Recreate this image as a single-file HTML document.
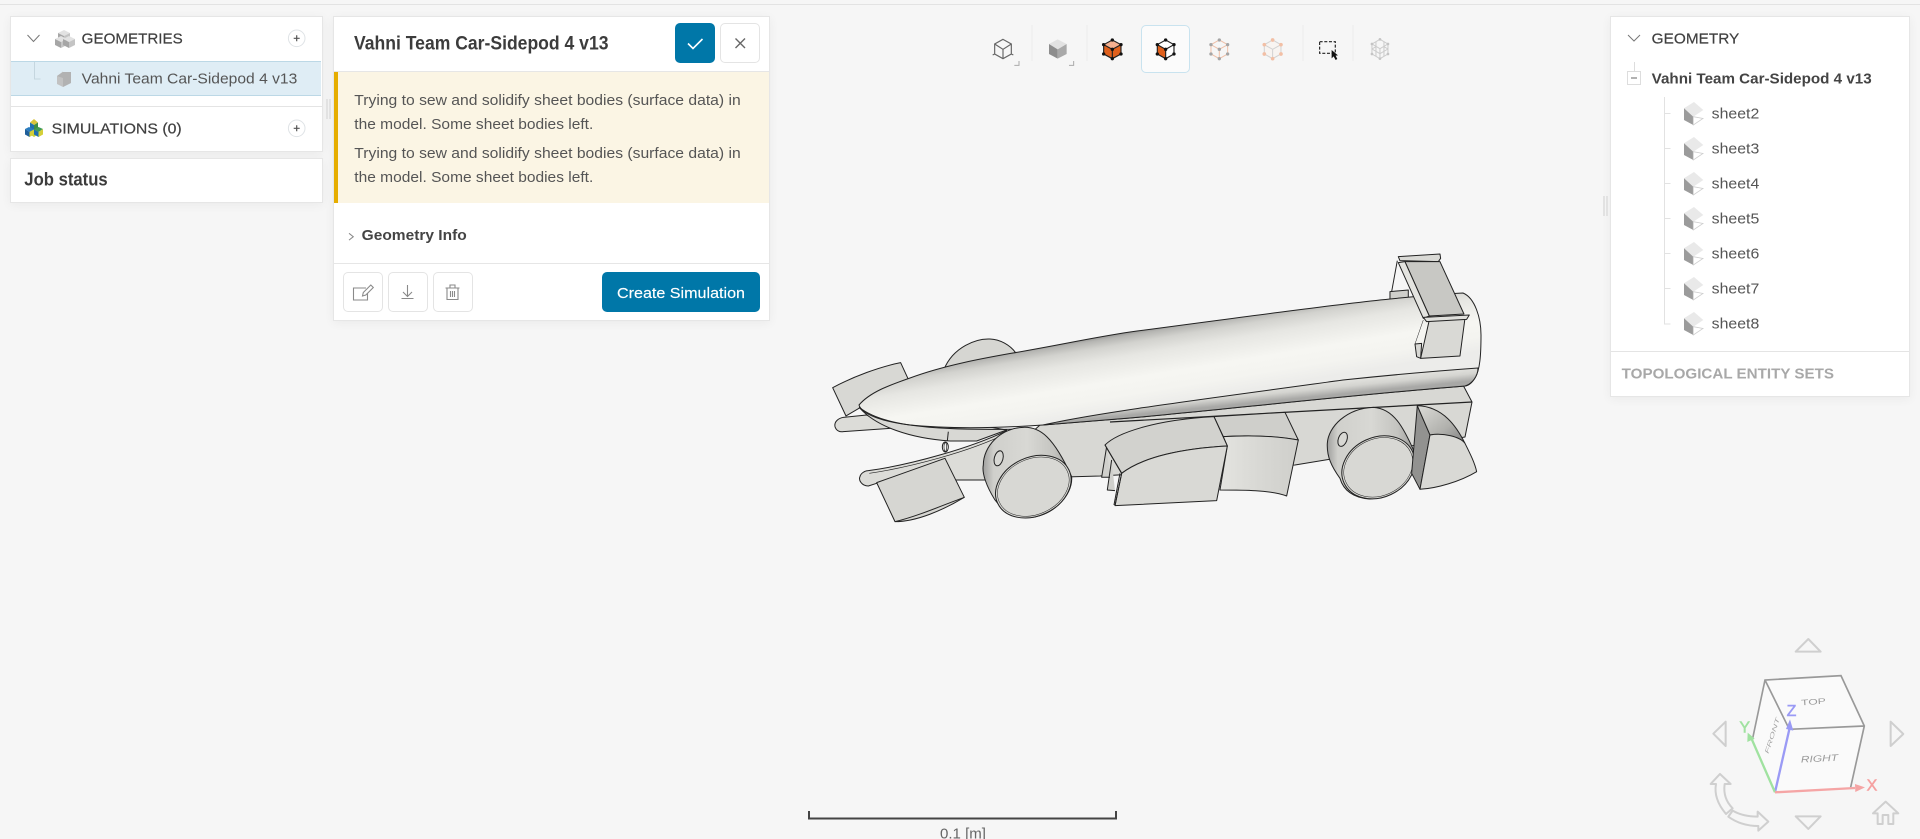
<!DOCTYPE html>
<html><head><meta charset="utf-8"><title>Geometry</title>
<style>
html,body{margin:0;padding:0;width:1920px;height:839px;overflow:hidden;background:#f6f6f6;font-family:"Liberation Sans",sans-serif}
.abs,.p{position:absolute;box-sizing:border-box}
.p{background:#fff;border:1px solid #e6e6e6;box-shadow:0 2px 10px rgba(0,0,0,.05)}
svg.o{position:absolute;left:0;top:0}
text{font-family:"Liberation Sans",sans-serif}
.r{font-size:15px;fill:#555}
.m{font-size:15px;fill:#3f3f3f;stroke:#3f3f3f;stroke-width:.2}
.b{font-size:15px;font-weight:bold;fill:#444}
</style></head><body>
<div class="abs" style="left:0;top:4px;width:1920px;height:1px;background:#e3e3e3"></div>
<div class="p" style="left:10px;top:16px;width:313px;height:136px"></div>
<div class="abs" style="left:11px;top:61px;width:310px;height:35px;background:#dfedf5;border-top:1px solid #bcd8e6;border-bottom:1px solid #bcd8e6"></div>
<div class="abs" style="left:11px;top:106px;width:311px;height:1px;background:#e4e4e4"></div>
<div class="p" style="left:10px;top:158px;width:313px;height:45px"></div>
<div class="p" style="left:333px;top:16px;width:437px;height:305px"></div>
<div class="abs" style="left:334px;top:71px;width:435px;height:1px;background:#e6e6e6"></div>
<div class="abs" style="left:334px;top:72px;width:435px;height:131px;background:#fbf5e4;border-left:4px solid #e6ad00"></div>
<div class="abs" style="left:334px;top:263px;width:435px;height:1px;background:#e6e6e6"></div>
<div class="abs" style="left:675px;top:23px;width:40px;height:40px;background:#0077a8;border-radius:5px"></div>
<div class="abs" style="left:720px;top:23px;width:40px;height:40px;background:#fff;border:1px solid #e4e4e4;border-radius:5px"></div>
<div class="abs" style="left:343px;top:272px;width:40px;height:40px;border:1px solid #e4e4e4;border-radius:5px"></div>
<div class="abs" style="left:388px;top:272px;width:40px;height:40px;border:1px solid #e4e4e4;border-radius:5px"></div>
<div class="abs" style="left:433px;top:272px;width:40px;height:40px;border:1px solid #e4e4e4;border-radius:5px"></div>
<div class="abs" style="left:602px;top:272px;width:158px;height:40px;background:#0077a8;border-radius:5px"></div>
<div class="p" style="left:1610px;top:16px;width:300px;height:381px"></div>
<div class="abs" style="left:1611px;top:351px;width:298px;height:1px;background:#e4e4e4"></div>
<div class="abs" style="left:326px;top:99px;width:5px;height:20px;border-left:2px solid #e2e2e2;border-right:2px solid #e2e2e2"></div>
<div class="abs" style="left:1603px;top:196px;width:5px;height:20px;border-left:2px solid #e2e2e2;border-right:2px solid #e2e2e2"></div>
<div class="abs" style="left:1141px;top:25px;width:49px;height:48px;background:#fbfbfb;border:1px solid #c9e3ef;border-radius:5px"></div>

<svg class="o" width="1920" height="839" viewBox="0 0 1920 839" xmlns="http://www.w3.org/2000/svg">
<defs>
<linearGradient id="bd" gradientUnits="userSpaceOnUse" x1="1130" y1="332" x2="1142.500" y2="407.600">
<stop offset="0" stop-color="#999997"/><stop offset=".04" stop-color="#b5b5b2"/><stop offset=".14" stop-color="#d2d2ce"/><stop offset=".3" stop-color="#e6e6e2"/><stop offset=".6" stop-color="#f6f6f2"/><stop offset=".8" stop-color="#f4f4f0"/><stop offset="1" stop-color="#ececea"/>
</linearGradient>
<linearGradient id="st" gradientUnits="userSpaceOnUse" x1="1240" y1="388" x2="1241.600" y2="404">
<stop offset="0" stop-color="#e8e8e4"/><stop offset=".55" stop-color="#d4d4d0"/><stop offset="1" stop-color="#a8a8a6"/>
</linearGradient>
<linearGradient id="wh" x1="0" y1="0" x2="1" y2="0">
<stop offset="0" stop-color="#a0a09e"/><stop offset=".12" stop-color="#d0d0cc"/><stop offset=".5" stop-color="#d8d8d4"/><stop offset=".8" stop-color="#c4c4c0"/><stop offset="1" stop-color="#9a9a98"/>
</linearGradient>
<linearGradient id="pd" x1="0" y1="0" x2="1" y2="0">
<stop offset="0" stop-color="#e4e4e0"/><stop offset=".5" stop-color="#d8d8d4"/><stop offset="1" stop-color="#cfcfcb"/>
</linearGradient>
<linearGradient id="rp" x1="0" y1="0" x2="1" y2="1">
<stop offset="0" stop-color="#dcdcd8"/><stop offset=".6" stop-color="#b0b0ac"/><stop offset="1" stop-color="#808080"/>
</linearGradient>
<g id="sh">
<polygon points="0,6.3 10,0 19.3,8 9.3,14.7" fill="#e9e9e9"/>
<polygon points="0,6.3 9.3,14.7 9.3,23 0,18" fill="#9b9b9b"/>
<polygon points="9.3,14.7 19,16.5 9.3,23" fill="#fff" stroke="#cfcfcf" stroke-width=".8"/>
</g>
<g id="cb"><polygon points="0,3 6,0 12,3 6,6" fill="#e2e2e2"/><polygon points="0,3 6,6 6,12 0,9" fill="#a6a6a6"/><polygon points="12,3 6,6 6,12 12,9" fill="#c4c4c4"/></g>
</defs>

<!-- left panel -->
<path d="M27.5 35l6 6.5 6-6.5" fill="none" stroke="#777" stroke-width="1"/>
<use href="#cb" x="58" y="30"/><use href="#cb" x="55" y="36"/><use href="#cb" x="63" y="36"/>
<text x="81.7" y="43.300" class="m" textLength="101" lengthAdjust="spacingAndGlyphs">GEOMETRIES</text>
<circle cx="296.7" cy="38.3" r="8.3" fill="#fff" stroke="#dfe3e6"/><path d="M293.7 38.3h6M296.7 35.3v6" stroke="#555" stroke-width="1.2"/>
<path d="M34.5 62v17h6" fill="none" stroke="#c5d6df"/>
<polygon points="57,76 63,71.5 63,72 71,72 71,83 63,87 57,84" fill="#c2c2c2"/><polygon points="63,72 71,72 71,83 63,87 63,78 57,76" fill="#a5a5a5" opacity=".55"/>
<text x="81.7" y="83.500" class="r" textLength="215.6" lengthAdjust="spacingAndGlyphs">Vahni Team Car-Sidepod 4 v13</text>
<g transform="translate(25,119)">
<polygon points="4.5,9 9,6.5 13.5,9 13.5,15 9,18 4.5,15" fill="#c6cf3a"/>
<polygon points="5,3.5 9,0 13,3.5 9,6" fill="#d9c43c"/><polygon points="5,3.5 9,6 9,11 5,8.5" fill="#1f6fb0"/><polygon points="13,3.5 9,6 9,11 13,8.5" fill="#3c8c45"/>
<polygon points="0,10 4,8 9,10.5 4.5,13" fill="#2a7cbf"/><polygon points="0,10 4.5,13 4.5,18 0,15.5" fill="#1f5f9a"/><polygon points="9,10.5 4.5,13 4.5,18 9,15.5" fill="#d4cf38"/>
<polygon points="9,10.5 13.5,8 18,10 13.5,13" fill="#3f9c58"/><polygon points="9,10.5 13.5,13 13.5,18 9,15.5" fill="#1f6fb0"/><polygon points="18,10 13.5,13 13.5,18 18,15.5" fill="#d4cf38"/>
</g>
<text x="51.7" y="133.300" class="m" textLength="130" lengthAdjust="spacingAndGlyphs">SIMULATIONS (0)</text>
<circle cx="296.7" cy="128.3" r="8.3" fill="#fff" stroke="#dfe3e6"/><path d="M293.7 128.3h6M296.7 125.3v6" stroke="#555" stroke-width="1.2"/>
<text x="24.3" y="185.3" font-size="18" font-weight="bold" fill="#3c3c3c" textLength="83.4" lengthAdjust="spacingAndGlyphs">Job status</text>

<!-- middle panel -->
<text x="354" y="49.500" font-size="19" font-weight="bold" fill="#3c3c3c" textLength="254.5" lengthAdjust="spacingAndGlyphs">Vahni Team Car-Sidepod 4 v13</text>
<path d="M688 43.5l5 5 9.5-9.5" fill="none" stroke="#fff" stroke-width="1.6"/>
<path d="M735.5 38.5l9.5 9.5M745 38.5l-9.5 9.5" fill="none" stroke="#666" stroke-width="1.4"/>
<text x="354.3" y="104.800" class="r" textLength="386.4" lengthAdjust="spacingAndGlyphs">Trying to sew and solidify sheet bodies (surface data) in</text>
<text x="354.3" y="128.800" class="r" textLength="239" lengthAdjust="spacingAndGlyphs">the model. Some sheet bodies left.</text>
<text x="354.3" y="157.800" class="r" textLength="386.4" lengthAdjust="spacingAndGlyphs">Trying to sew and solidify sheet bodies (surface data) in</text>
<text x="354.3" y="181.800" class="r" textLength="239" lengthAdjust="spacingAndGlyphs">the model. Some sheet bodies left.</text>
<path d="M349 233.300l4.300 3.400-4.300 3.400" fill="none" stroke="#888"/>
<text x="361.7" y="240" class="b" textLength="105" lengthAdjust="spacingAndGlyphs">Geometry Info</text>
<g fill="none" stroke="#8a8a8a" stroke-width="1.1">
<path d="M366 288h-12.500v12h14v-7"/><path d="M362.500 296l.8-3.500 7.500-7.500 2.500 2.500-7.500 7.500z"/>
<path d="M407.500 285v11M403 292l4.500 4.500 4.500-4.500M401.500 298.500h12"/>
<path d="M445.500 288h14M447 288v11.500h11V288M450 288v-3h5v3M450.500 291v6M452.500 291v6M454.500 291v6"/>
</g>
<text x="617" y="298" font-size="15" fill="#fff" stroke="#fff" stroke-width=".15" textLength="128" lengthAdjust="spacingAndGlyphs">Create Simulation</text>

<!-- toolbar -->
<g stroke="#ececec" stroke-width="1"><path d="M1032 25v36M1087 25v36M1303 25v36M1353 25v36"/></g>
<g transform="translate(970,10) scale(.3333)">
<g fill="none" stroke="#666" stroke-width="3.500"><polygon points="99,88 124,102 124,132 99,146 74,132 74,102"/><path d="M74,102L99,118L124,102M99,118V146M74,132l-6,3M124,132l6,3"/></g>
<path d="M147,153v13h-14" fill="none" stroke="#aaa" stroke-width="3"/>
<polygon points="263,88 290,102 263,118 237,102" fill="#e2e2e2"/><polygon points="237,102 263,118 263,146 237,132" fill="#8d8d8d"/><polygon points="290,102 263,118 263,146 290,132" fill="#a9a9a9"/>
<path d="M311,153v13h-14" fill="none" stroke="#aaa" stroke-width="3"/>
<polygon points="427,90 453,104 427,118 401,104" fill="#f5b090"/><polygon points="401,104 427,118 427,146 401,132" fill="#e0601c"/><polygon points="453,104 427,118 427,146 453,132" fill="#e0601c"/>
<g fill="none" stroke="#222" stroke-width="3.500"><polygon points="427,90 453,104 453,132 427,146 401,132 401,104"/><path d="M401,104L427,118L453,104M427,118V146"/></g>
<g fill="#111"><circle cx="427" cy="90" r="5"/><circle cx="453" cy="104" r="5"/><circle cx="453" cy="132" r="5"/><circle cx="427" cy="146" r="5"/><circle cx="401" cy="132" r="5"/><circle cx="401" cy="104" r="5"/><circle cx="427" cy="118" r="5"/></g>
<polygon points="587,90 612,104 612,132 587,146 562,132 562,104" fill="#fff"/><polygon points="562,104 587,118 587,146 562,132" fill="#e0601c"/>
<g fill="none" stroke="#222" stroke-width="3.500"><polygon points="587,90 612,104 612,132 587,146 562,132 562,104"/><path d="M562,104L587,118L612,104M587,118V146"/></g>
<g fill="#111"><circle cx="587" cy="90" r="5"/><circle cx="612" cy="104" r="5"/><circle cx="612" cy="132" r="5"/><circle cx="587" cy="146" r="5"/><circle cx="562" cy="132" r="5"/><circle cx="562" cy="104" r="5"/><circle cx="587" cy="118" r="5"/></g>
<g fill="none" stroke="#f0c0a8" stroke-width="3"><polygon points="748,90 773,104 773,132 748,146 723,132 723,104"/><path d="M723,104L748,118L773,104M748,118V146"/></g>
<g fill="#a5a5a5"><circle cx="748" cy="90" r="5"/><circle cx="773" cy="104" r="5"/><circle cx="773" cy="132" r="5"/><circle cx="748" cy="146" r="5"/><circle cx="723" cy="132" r="5"/><circle cx="723" cy="104" r="5"/><circle cx="748" cy="118" r="5"/></g>
<polygon points="908,90 933,104 933,132 908,146 883,132 883,104" fill="#f8f4f1"/>
<g fill="none" stroke="#d2d2d2" stroke-width="3"><polygon points="908,90 933,104 933,132 908,146 883,132 883,104"/><path d="M883,104L908,118L933,104M908,118V146"/></g>
<g fill="#f2bfa5"><circle cx="908" cy="90" r="5.500"/><circle cx="933" cy="104" r="5.500"/><circle cx="933" cy="132" r="5.500"/><circle cx="908" cy="146" r="5.500"/><circle cx="883" cy="132" r="5.500"/><circle cx="883" cy="104" r="5.500"/></g>
<rect x="1049" y="95" width="47" height="35" fill="none" stroke="#222" stroke-width="3.500" stroke-dasharray="9 5"/>
<polygon points="1085,120 1085,145 1091,139 1097,150 1102,147 1097,137 1104,136" fill="#111"/>
<g fill="none" stroke="#cbcbcb" stroke-width="3"><polygon points="1230,88 1254,102 1254,132 1230,146 1206,132 1206,102"/><path d="M1206,102L1230,116L1254,102M1230,116V146M1218,95V139M1242,95V139M1206,117L1230,131L1254,117M1206,117L1218,110M1254,117L1242,110"/></g>
<g fill="#c4c4c4"><circle cx="1230" cy="88" r="4"/><circle cx="1254" cy="102" r="4"/><circle cx="1254" cy="132" r="4"/><circle cx="1230" cy="146" r="4"/><circle cx="1206" cy="132" r="4"/><circle cx="1206" cy="102" r="4"/></g>
</g>

<!-- right panel -->
<path d="M1628 35l6 6 6-6" fill="none" stroke="#777" stroke-width="1"/>
<text x="1651.7" y="43.300" class="m" textLength="87.6" lengthAdjust="spacingAndGlyphs">GEOMETRY</text>
<path d="M1634.5 62v10" stroke="#ddd"/><rect x="1627.5" y="71.500" width="13" height="13" fill="#fff" stroke="#ddd"/><path d="M1631 78h6" stroke="#666"/>
<text x="1651.7" y="83.300" class="b" textLength="220" lengthAdjust="spacingAndGlyphs">Vahni Team Car-Sidepod 4 v13</text>
<path d="M1664.500 97v227h6M1664.500 113.500h6M1664.500 148.500h6M1664.500 183.500h6M1664.500 218.500h6M1664.500 253.500h6M1664.500 288.500h6" fill="none" stroke="#e2e2e2"/>
<use href="#sh" x="1684" y="102"/><use href="#sh" x="1684" y="137"/><use href="#sh" x="1684" y="172"/><use href="#sh" x="1684" y="207"/><use href="#sh" x="1684" y="242"/><use href="#sh" x="1684" y="277"/><use href="#sh" x="1684" y="312"/>
<g>
<text x="1711.7" y="118.500" class="r" textLength="47.6" lengthAdjust="spacingAndGlyphs">sheet2</text>
<text x="1711.7" y="153.500" class="r" textLength="47.6" lengthAdjust="spacingAndGlyphs">sheet3</text>
<text x="1711.7" y="188.500" class="r" textLength="47.6" lengthAdjust="spacingAndGlyphs">sheet4</text>
<text x="1711.7" y="223.500" class="r" textLength="47.6" lengthAdjust="spacingAndGlyphs">sheet5</text>
<text x="1711.7" y="258.500" class="r" textLength="47.6" lengthAdjust="spacingAndGlyphs">sheet6</text>
<text x="1711.7" y="293.500" class="r" textLength="47.6" lengthAdjust="spacingAndGlyphs">sheet7</text>
<text x="1711.7" y="328.500" class="r" textLength="47.6" lengthAdjust="spacingAndGlyphs">sheet8</text>
</g>
<text x="1621.7" y="378.700" font-size="15" font-weight="bold" fill="#a8a8a8" textLength="212.300" lengthAdjust="spacingAndGlyphs">TOPOLOGICAL ENTITY SETS</text>

<!-- car: floor -->
<g stroke="#222" stroke-width="1" stroke-linejoin="round">
<polygon points="1472,402 1463,385 1040,425 990,470 957,480 1100,476 1295,465 1465,437" fill="#d8d8d4"/>
<path d="M1110,422L1472,402" fill="none" stroke-width="1.2"/>
<!-- z7 behind body: rear wing strut -->
<g transform="translate(1110,240) scale(.3333)" stroke-width="3">
<path d="M840,155L895,150L895,180L840,180Z" fill="#cfcfcb"/>
<path d="M862,62L845,155" fill="none"/>
</g>
<!-- z6 behind body -->
<g transform="translate(810,240) scale(.3333)" stroke-width="3">
<path d="M402,388C430,320 500,295 540,297C570,298 600,315 617,338Z" fill="#d6d6d2"/>
<path d="M68,443C130,410 210,380 272,368L295,418L108,528Z" fill="#d8d8d4"/>
<path d="M100,532C85,535 72,545 75,560C78,572 90,577 100,575L240,565L170,525Z" fill="#dcdcd8"/>
<path d="M150,505C200,560 300,595 420,603L500,603L590,570L420,540Z" fill="#d8d8d4"/>
<path d="M415,575L412,603" fill="none"/>
<ellipse cx="406" cy="621" rx="9" ry="15" fill="none"/><ellipse cx="406" cy="621" rx="4" ry="13" fill="none" stroke-width="2"/>
</g>
</g>
<!-- body -->
<path d="M859,405C870,392 890,385 910,378C945,365 985,358 1013,353C1060,345 1090,338 1130,332C1250,316 1340,304 1390,299C1420,296 1445,294 1463,293C1475,298 1481,318 1481,335C1481,355 1480,370 1475,378C1472,383 1468,386 1465,386C1350,395 1220,410 1130,418L1043,425C1000,428 950,429 910,425C885,422 862,415 859,405Z" fill="url(#bd)" stroke="#222" stroke-width="1"/>
<path d="M1043,425C1100,412 1220,397 1343,380C1400,374 1450,370 1478,368C1478,376 1472,384 1465,386C1350,395 1220,410 1130,418Z" fill="url(#st)" stroke="#222" stroke-width="1"/>
<path d="M859,407C880,425 930,431 1020,429" fill="none" stroke="#222" stroke-width="1"/>
<g stroke="#222" stroke-width="3" stroke-linejoin="round" transform="translate(810,240) scale(.3333)">
<!-- lower wing -->
<path d="M175,692C300,675 480,625 590,572L530,720L440,720L200,730L175,738C155,738 145,720 150,710C152,700 165,692 175,692Z" fill="#dcdcd8"/>
<path d="M178,700C300,682 480,635 590,580" fill="none" stroke-width="2"/>
<path d="M200,728L405,655L463,772C400,810 320,845 255,845Z" fill="#d6d6d2"/>
<path d="M255,845C320,830 400,795 463,772" fill="none"/>
<!-- wheel -->
<path d="M520,675C520,620 570,565 640,562C690,560 730,590 785,710C790,770 720,835 650,833C600,833 570,800 555,780C530,740 515,700 520,675Z" fill="url(#wh)"/>
<ellipse cx="670" cy="740" rx="118" ry="88" transform="rotate(-25 670 740)" fill="#d8d8d4"/>
<ellipse cx="670" cy="740" rx="112" ry="83" transform="rotate(-25 670 740)" fill="#d8d8d4" stroke-width="1.500"/>
<ellipse cx="566" cy="655" rx="13" ry="23" transform="rotate(15 566 655)" fill="#d8d8d4"/>
<!-- comb -->
<path d="M890,620L875,712L900,712M905,660L892,750L915,752M930,700L912,795" fill="#d0d0cc"/>
</g>
<g stroke="#222" stroke-width="3" stroke-linejoin="round" transform="translate(1110,240) scale(.3333)">
<!-- pod 2 -->
<path d="M312,530L525,517L565,600C500,588 400,585 340,590Z" fill="#cfcfcb"/>
<path d="M340,590C420,585 500,588 565,600L530,768C480,750 400,750 330,750L352,618Z" fill="url(#pd)"/>
<!-- pod 1 -->
<path d="M-15,615C20,580 130,540 312,530L352,618C220,625 100,650 35,700Z" fill="#d2d2ce"/>
<path d="M35,700C100,650 220,625 352,618L320,782L15,797Z" fill="#d9d9d5"/>
<path d="M-15,615L35,700L15,797" fill="none"/>
<!-- rear wheel -->
<path d="M652,610C655,560 710,505 790,502C850,505 880,560 915,640C920,700 850,770 780,777C730,775 700,750 690,715C665,680 650,650 652,610Z" fill="url(#wh)"/>
<ellipse cx="805" cy="682" rx="113" ry="90" transform="rotate(-25 805 682)" fill="#d8d8d4"/>
<ellipse cx="805" cy="682" rx="107" ry="85" transform="rotate(-25 805 682)" fill="#d8d8d4" stroke-width="1.500"/>
<ellipse cx="698" cy="598" rx="13" ry="22" transform="rotate(20 698 598)" fill="#d8d8d4"/>
<!-- rear pod -->
<path d="M922,497L960,585L930,748L905,700Z" fill="#929290"/>
<path d="M922,497C1000,500 1040,560 1065,610C1030,585 990,580 960,585Z" fill="url(#rp)"/>
<path d="M960,585C1000,578 1050,590 1065,610C1080,640 1095,670 1100,695C1050,725 980,745 930,748Z" fill="#d9d9d5"/>
<!-- rear wing -->
<path d="M865,50L990,42L992,55L985,65L870,62Z" fill="#dadad6"/>
<path d="M885,65L990,65L1062,222L958,228Z" fill="#c8c8c4"/>
<path d="M865,68L885,65L958,228L940,235Z" fill="#e4e4e0"/>
<path d="M915,312L935,310L932,355L920,350Z" fill="#d8d8d4"/>
<path d="M940,240L915,312" fill="none" stroke-width="1.500"/>
<path d="M958,240L1065,235L1050,348L932,355Z" fill="#d9d9d5"/>
<path d="M940,232L1078,225L1070,238L950,245Z" fill="#e0e0dc"/>
</g>

<!-- scale bar -->
<path d="M809 811v7.500h307V811" fill="none" stroke="#444" stroke-width="2"/>
<text x="940" y="838.500" font-size="15" fill="#666" textLength="46" lengthAdjust="spacingAndGlyphs">0.1 [m]</text>

<!-- nav cube -->
<g transform="translate(1690,620) scale(.3333)">
<polygon points="225,180 453,167 523,318 482,502 255,517 187,360" fill="#fafafa"/>
<g fill="none" stroke="#999" stroke-width="5"><path d="M187,360L225,180L453,167L523,318L482,502M225,180L298,328L523,318"/></g>
<text x="334" y="256" font-size="24" fill="#9a9a9a" transform="rotate(-4 334 256)" textLength="74" lengthAdjust="spacingAndGlyphs">TOP</text>
<text x="333" y="428" font-size="28" font-style="italic" fill="#9a9a9a" transform="rotate(-3 333 428)" textLength="112" lengthAdjust="spacingAndGlyphs">RIGHT</text>
<text x="235" y="402" font-size="18" font-style="italic" fill="#a5a5a5" transform="rotate(-72 235 402)" textLength="112" lengthAdjust="spacingAndGlyphs">FRONT</text>
<path d="M255,517L298,328" stroke="#9a9af5" stroke-width="7"/><polygon points="300,298 310,332 288,327" fill="#9a9af5"/>
<path d="M255,517L182,350" stroke="#a0e2a0" stroke-width="7"/><polygon points="173,338 194,356 172,366" fill="#a0e2a0"/>
<path d="M255,517L495,504" stroke="#f5a5a5" stroke-width="7"/><polygon points="525,502 495,492 496,516" fill="#f5a5a5"/>
<text x="530" y="512" font-size="48" fill="#f5a0a0" stroke="#f5a0a0" stroke-width="1.500">X</text>
<text x="148" y="338" font-size="48" fill="#a0e2a0" stroke="#a0e2a0" stroke-width="1.500">Y</text>
<text x="290" y="288" font-size="48" fill="#9a9af5" stroke="#9a9af5" stroke-width="1.500">Z</text>
<g fill="none" stroke="#cfcfcf" stroke-width="6" stroke-linejoin="round">
<polygon points="317,95 355,57 392,95"/><polygon points="317,589 392,589 355,627"/><polygon points="107,305 70,341 107,378"/><polygon points="602,305 640,342 602,378"/>
<path d="M587,545L625,580L610,580L610,612L595,612L595,585L578,585L578,612L563,612L563,580L549,580Z"/>
<path d="M90,462L122,492L104,492C100,520 108,545 128,565L108,582C85,555 72,525 78,492L62,492Z"/>
<path d="M115,590L128,572C150,585 175,590 203,590L203,575L235,605L205,632L205,618C170,618 140,608 115,590Z"/>
</g>
</g>
</svg>
</body></html>
